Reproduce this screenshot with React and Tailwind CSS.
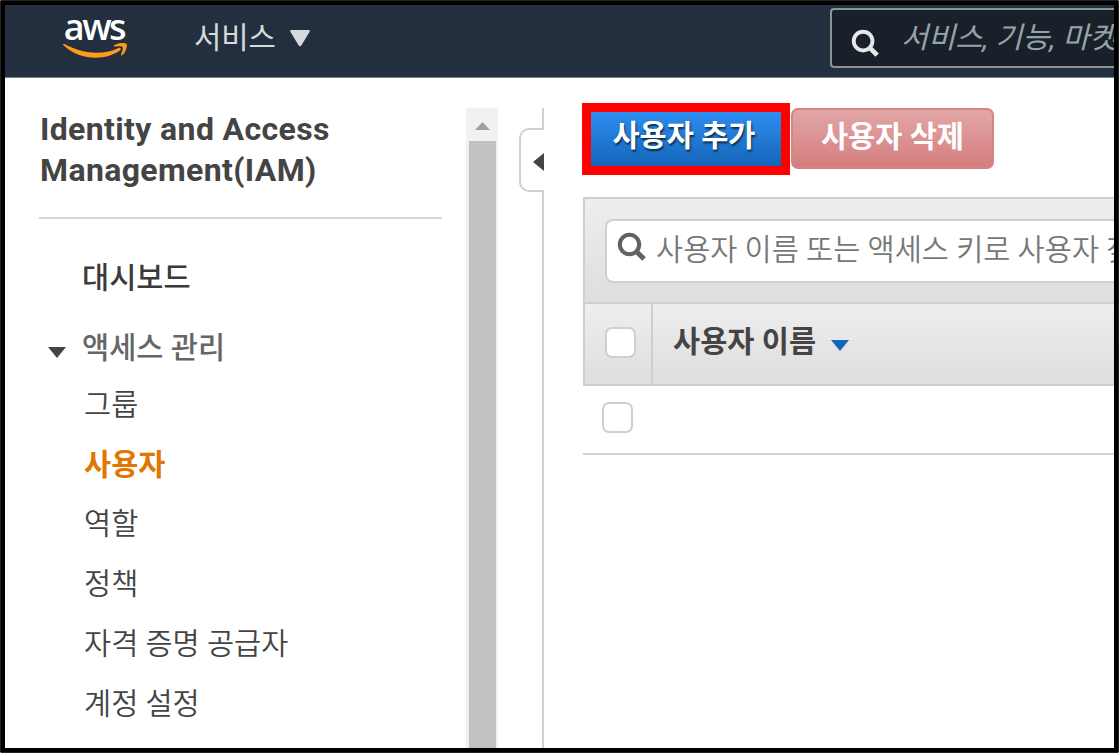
import React from "react";

const menu = [
  { label: "그룹" },
  { label: "사용자", active: true },
  { label: "역할" },
  { label: "정책" },
  { label: "자격 증명 공급자" },
  { label: "계정 설정" },
];

function SearchIcon({ className }) {
  return (
    <svg viewBox="0 0 30 30" className={className} fill="none" stroke="currentColor" strokeWidth="4">
      <circle cx="12.5" cy="12.5" r="9.7" />
      <path d="M19.5 19.5 L27 27" strokeWidth="5" />
    </svg>
  );
}

function Header() {
  return (
    <header className="flex h-[73px] shrink-0 items-start justify-between border-b border-[#7b828b] bg-[#232f3e]">
      <div className="flex items-start">
        <div className="ml-[56px] flex w-[68px] flex-col items-center pt-[7px]">
          <span className="h-[30px] pr-[2px] font-['Open_Sans'] text-[36px] leading-[29px] font-semibold tracking-[-2.5px] text-white">
            aws
          </span>
          <svg viewBox="0 0 68 20" className="h-[20px] w-[68px]" fill="#ff9a1c">
            <path d="M2.5 3.2 C1.4 2.5 2 1.4 3.4 2.1 C22 12.5 42 13.2 57 6.2 C59.4 5.1 60.8 7 58.9 8.4 C44 19 18.5 18.5 2.5 3.2 Z" />
            <path d="M53.5 3.1 C57 .8 64.4 .5 65.6 2 C66.7 3.5 64.8 10.3 61.4 13.1 C60.3 14 59.7 13.5 60.1 12.4 C61.1 9.9 62.4 6.4 61.6 5.1 C60.8 4 57 4.3 54.2 4.6 C52.8 4.8 52.4 4 53.5 3.1 Z" />
          </svg>
        </div>
        <div className="ml-[65px] flex items-start gap-[14px] pt-[9px] text-[#d5dbdb]">
          <span className="text-[29.7px] leading-[48px]">서비스</span>
          <svg viewBox="0 0 20 17" className="mt-[16px] h-[17px] w-[20px]" fill="currentColor">
            <path d="M1.5 0 H18.5 Q20.5 .3 19.5 2 L11.3 15.5 Q10 17 8.7 15.5 L.5 2 Q-.5 .3 1.5 0 Z" />
          </svg>
        </div>
      </div>
      <div className="mt-[3px] flex h-[60px] w-[284px] shrink-0 items-start overflow-hidden rounded-l border-2 border-r-0 border-[#879596] bg-[#1a202a] text-[#95a5a6]">
        <SearchIcon className="mt-[19px] ml-[19px] size-[29px] shrink-0 text-[#e4e8e8]" />
        <span className="ml-[21px] pt-[4px] text-[29.5px] leading-[48px] whitespace-nowrap italic">
          서비스, 기능, 마켓
        </span>
      </div>
    </header>
  );
}

function Sidebar() {
  return (
    <aside className="w-[437px] shrink-0 pt-[31px] pl-[35px] text-[#444]">
      <h1 className="font-['Roboto'] text-[32px] leading-[40.5px] font-bold tracking-[0.37px] whitespace-nowrap">
        <span className="block">Identity and Access</span>
        <span className="block">Management(IAM)</span>
      </h1>
      <hr className="mt-[27px] -ml-px w-[403px] border-t-2 border-[#d3d6d6]" />
      <div className="mt-[35px] pl-[42px] text-[29.5px] leading-[48px] font-medium text-[#3a3a3a]">대시보드</div>
      <div className="mt-[22px] flex items-start pl-[8px] text-[29.5px] leading-[48px] font-medium text-[#666]">
        <svg viewBox="0 0 18 11" className="mt-[23px] h-[11px] w-[18px]" fill="#444">
          <path d="M0 0 H18 L9 11 Z" />
        </svg>
        <span className="ml-[16px]">액세스 관리</span>
      </div>
      <ul className="mt-[4px] pl-[44px] text-[29.5px] leading-[59.7px]">
        {menu.map((m) => (
          <li key={m.label} className={m.active ? "font-bold text-[#e07700]" : "font-[350] text-[#444]"}>
            {m.label}
          </li>
        ))}
      </ul>
    </aside>
  );
}

function Scrollbar() {
  return (
    <div className="mt-[30px] ml-[24px] flex w-[32px] shrink-0 flex-col items-center bg-[#f1f1f1]">
      <svg viewBox="0 0 15 8" className="mt-[14px] mb-[11px] h-[8px] w-[15px] shrink-0" fill="#a0a0a0">
        <path d="M0 8 L7.5 0 L15 8 Z" />
      </svg>
      <div className="w-[27px] grow bg-[#c1c1c1]" />
    </div>
  );
}

function CollapseHandle() {
  return (
    <div className="mt-[30px] ml-[21px] flex w-[25px] shrink-0 flex-col items-end">
      <div className="h-[20px] w-[2px] bg-[#d0d0d0]" />
      <div className="flex h-[64px] w-[25px] shrink-0 items-center justify-end rounded-l-[10px] border-2 border-r-0 border-[#d0d0d0]">
        <svg viewBox="0 0 11 18" className="mt-[4px] h-[18px] w-[11px]" fill="#444">
          <path d="M11 0 V18 L0 9 Z" />
        </svg>
      </div>
      <div className="w-[2px] grow bg-[#d0d0d0]" />
    </div>
  );
}

function Checkbox() {
  return <span className="block size-[31px] rounded-[7px] border-2 border-[#cfcfcf] bg-white" />;
}

function Main() {
  return (
    <main className="ml-[38px] min-w-0 grow overflow-hidden pt-[25px]">
      <div className="flex items-start">
        <button className="h-[72px] w-[208px] shrink-0 border-[9px] border-[#f00] bg-linear-to-b from-[#2e8df0] to-[#1366b9] pr-[4px] pb-[6px] text-[29.5px] leading-[44px] font-bold whitespace-nowrap text-white [text-shadow:1px_2px_2px_rgba(0,0,0,0.65)]">
          사용자 추가
        </button>
        <button className="mt-[5px] ml-px h-[61px] w-[203px] shrink-0 rounded-[7px] border-2 border-[#d98284] bg-linear-to-b from-[#e2a6a6] to-[#d47e7e] pb-[4px] text-[29.5px] leading-[44px] font-bold text-white">
          사용자 삭제
        </button>
      </div>
      <div className="mt-[22px] ml-px border-2 border-r-0 border-[#cecece]">
        <div className="h-[103px] bg-linear-to-b from-[#eee] to-[#dedede] pt-[20px] pl-[20px]">
          <div className="flex h-[64px] items-start overflow-hidden rounded-l-[8px] border-2 border-r-0 border-[#cfcfcf] bg-white">
            <SearchIcon className="mt-[11px] ml-[10px] size-[30px] shrink-0 text-[#626262]" />
            <span className="ml-[9px] pt-[5px] text-[29.5px] leading-[48px] font-[350] whitespace-nowrap text-[#777]">
              사용자 이름 또는 액세스 키로 사용자 찾
            </span>
          </div>
        </div>
        <div className="flex h-[82px] border-t-2 border-[#cecece] bg-linear-to-b from-[#eee] to-[#dedede]">
          <div className="flex w-[68px] items-center border-r-2 border-[#cecece] pb-[3px] pl-[20px]">
            <Checkbox />
          </div>
          <div className="flex items-start pl-[20px] text-[29.5px] leading-[48px] font-bold text-[#444]">
            <span className="pt-[14px]">사용자 이름</span>
            <svg viewBox="0 0 18 11" className="mt-[36px] ml-[15px] h-[11px] w-[18px]" fill="#1166bb">
              <path d="M0 0 H18 L9 11 Z" />
            </svg>
          </div>
        </div>
      </div>
      <div className="ml-px h-[69px] border-b-2 border-[#d3d3d3] pt-[16px] pl-[19px]">
        <Checkbox />
      </div>
    </main>
  );
}

export default function App() {
  return (
    <div className="h-[753px] w-[1119px] overflow-hidden rounded-[1px] border border-[#222] bg-white font-['Roboto','Noto_Sans_CJK_KR',sans-serif]">
      <div className="flex h-full flex-col overflow-hidden border-4 border-black">
        <Header />
        <div className="flex min-h-0 grow overflow-hidden">
          <Sidebar />
          <Scrollbar />
          <CollapseHandle />
          <Main />
        </div>
      </div>
    </div>
  );
}
